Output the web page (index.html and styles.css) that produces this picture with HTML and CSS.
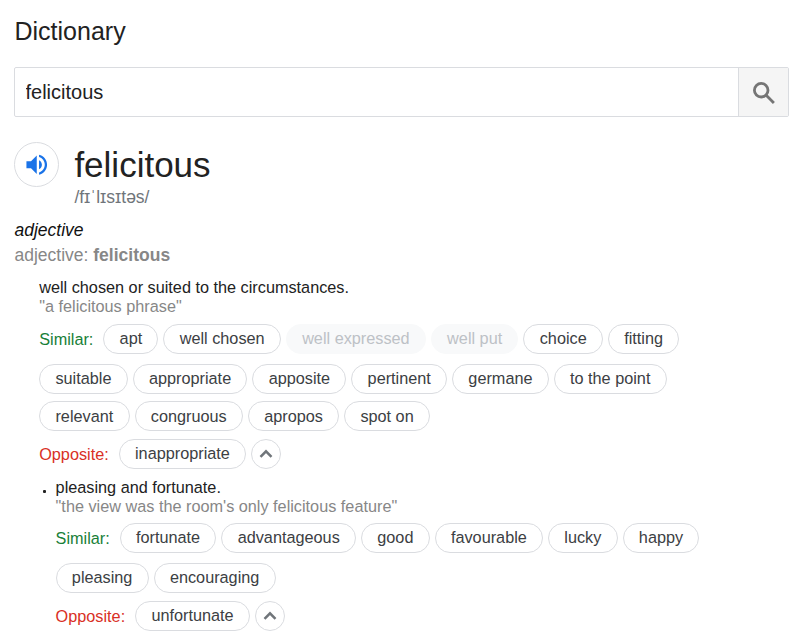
FILE: index.html
```html
<!DOCTYPE html>
<html lang="en">
<head>
<meta charset="utf-8">
<title>Dictionary</title>
<link rel="stylesheet" href="styles.css">
</head>
<body>
<main class="dictionary">
  <h1 class="title">Dictionary</h1>
  <form class="search">
    <input class="search-input" type="text" value="felicitous" aria-label="Word">
    <button class="search-button" type="button" aria-label="Search">
      <svg class="search-icon" viewBox="0 0 22 22"><circle cx="8.2" cy="8.2" r="6.8"/><path d="M13.2 13.2L20.900 20.900"/></svg>
    </button>
  </form>
  <header class="entry">
    <button class="speaker" type="button" aria-label="Listen">
      <svg class="speaker-icon" viewBox="0 0 24 24"><path d="M3 9v6h4l5 5V4L7 9H3zm13.500 3c0-1.770-1.020-3.290-2.500-4.030v8.050c1.480-.730 2.500-2.250 2.500-4.020zM14 3.230v2.060c2.890.860 5 3.540 5 6.710s-2.110 5.850-5 6.710v2.060c4.010-.910 7-4.490 7-8.770s-2.990-7.860-7-8.770z"/></svg>
    </button>
    <div>
      <h2 class="word">felicitous</h2>
      <div class="phonetic">/fɪˈlɪsɪtəs/</div>
    </div>
  </header>
  <div class="pos">adjective</div>
  <div class="forms">adjective: <b>felicitous</b></div>

  <section class="sense">
    <p class="definition">well chosen or suited to the circumstances.</p>
    <p class="example">"a felicitous phrase"</p>
    <div class="chips first">
      <span class="label similar">Similar:</span>
      <span class="chip">apt</span><span class="chip">well chosen</span><span class="chip muted">well expressed</span><span class="chip muted">well put</span><span class="chip">choice</span><span class="chip">fitting</span>
    </div>
    <div class="chips more">
      <span class="chip">suitable</span><span class="chip">appropriate</span><span class="chip">apposite</span><span class="chip">pertinent</span><span class="chip">germane</span><span class="chip">to the point</span>
    </div>
    <div class="chips wrapped">
      <span class="chip">relevant</span><span class="chip">congruous</span><span class="chip">apropos</span><span class="chip">spot on</span>
    </div>
    <div class="chips opposites">
      <span class="label opposite">Opposite:</span>
      <span class="chip">inappropriate</span>
      <button class="collapse" type="button" aria-label="Show less"><svg class="chevron" viewBox="0 0 14 10"><path d="M1.500 7.800L7 2.300L12.500 7.800"/></svg></button>
    </div>
  </section>

  <section class="sense bulleted">
    <p class="definition">pleasing and fortunate.</p>
    <p class="example">"the view was the room's only felicitous feature"</p>
    <div class="chips first">
      <span class="label similar">Similar:</span>
      <span class="chip">fortunate</span><span class="chip">advantageous</span><span class="chip">good</span><span class="chip">favourable</span><span class="chip">lucky</span><span class="chip">happy</span>
    </div>
    <div class="chips more">
      <span class="chip">pleasing</span><span class="chip">encouraging</span>
    </div>
    <div class="chips opposites">
      <span class="label opposite">Opposite:</span>
      <span class="chip">unfortunate</span>
      <button class="collapse" type="button" aria-label="Show less"><svg class="chevron" viewBox="0 0 14 10"><path d="M1.500 7.800L7 2.300L12.500 7.800"/></svg></button>
    </div>
  </section>
</main>
</body>
</html>
```
FILE: styles.css
```css
* { box-sizing: border-box; }
body {
  margin: 0;
  background: #fff;
  color: #222;
  font-family: "Liberation Sans", Arial, sans-serif;
  font-size: 16.25px;
}
h1, h2, p { margin: 0; font-weight: 400; }
button { padding: 0; font: inherit; }
svg { display: block; fill: none; }

.dictionary { padding: 16px 15px 0 14px; }
.title { font-size: 25px; line-height: 30px; margin-left: 0.5px; }

.search {
  display: flex;
  height: 50px;
  margin-top: 21px;
  border: 1px solid #dadce0;
  border-radius: 2px;
}
.search-input {
  flex: 1;
  min-width: 0;
  padding: 0 10.5px;
  border: 0;
  background: transparent;
  color: #222;
  font: 20px "Liberation Sans", Arial, sans-serif;
}
.search-button {
  display: grid;
  place-items: center;
  width: 50px;
  border: 0;
  border-left: 1px solid #dadce0;
  background: #f5f5f5;
}
.search-icon { width: 22px; height: 22px; margin-top: 2px; stroke: #757575; stroke-width: 2.800; }

.entry { display: flex; gap: 15px; margin-top: 25px; height: 76px; }
.speaker {
  display: grid;
  place-items: center;
  width: 45px;
  height: 45px;
  border: 1px solid #dadce0;
  border-radius: 50%;
  background: #fff;
}
.speaker-icon { width: 27.5px; height: 27.5px; fill: #1a73e8; }
.word { font-size: 35px; line-height: 45px; margin-left: 0.4px; }
.phonetic { font-size: 17.5px; line-height: 20px; color: #70757a; margin-left: 0.4px; }

.pos { font-size: 17.5px; line-height: 25px; font-style: italic; color: #111; margin-left: 0.5px; }
.forms { font-size: 17.5px; line-height: 25px; color: #878787; margin-left: 0.5px; }

.sense { margin: 10px 0 0 25.2px; }
.definition { line-height: 19px; }
.example { line-height: 19px; color: #878787; }

.chips { display: flex; gap: 5px; height: 30px; }
.chips.first { margin-top: 8px; }
.chips.more { margin-top: 10px; }
.chips.wrapped { margin-top: 7px; }
.chips.opposites { margin-top: 8px; }

.label { line-height: 31px; margin-right: 5px; }
.similar { color: #188038; }
.opposite { color: #d93025; }

.chip {
  padding: 0 15.25px;
  border: 1px solid #dadce0;
  border-radius: 15px;
  line-height: 26px;
  white-space: nowrap;
  color: #3c4043;
}
.wrapped .chip { line-height: 28px; }
.chip.muted { border-color: #f8f9fa; background: #f8f9fa; color: #bdc1c6; }

.collapse {
  display: grid;
  place-items: center;
  width: 30px;
  height: 30px;
  border: 1px solid #dadce0;
  border-radius: 50%;
  background: #fff;
}
.chevron { width: 14px; height: 10px; stroke: #70757a; stroke-width: 2.500; }

.bulleted { position: relative; margin: 9px 0 0 41.6px; }
.bulleted .chips.first { margin-top: 7px; }
.bulleted::before {
  content: "";
  position: absolute;
  left: -12.6px;
  top: 12px;
  width: 3px;
  height: 3px;
  border-radius: 1px;
  background: #222;
}
```
